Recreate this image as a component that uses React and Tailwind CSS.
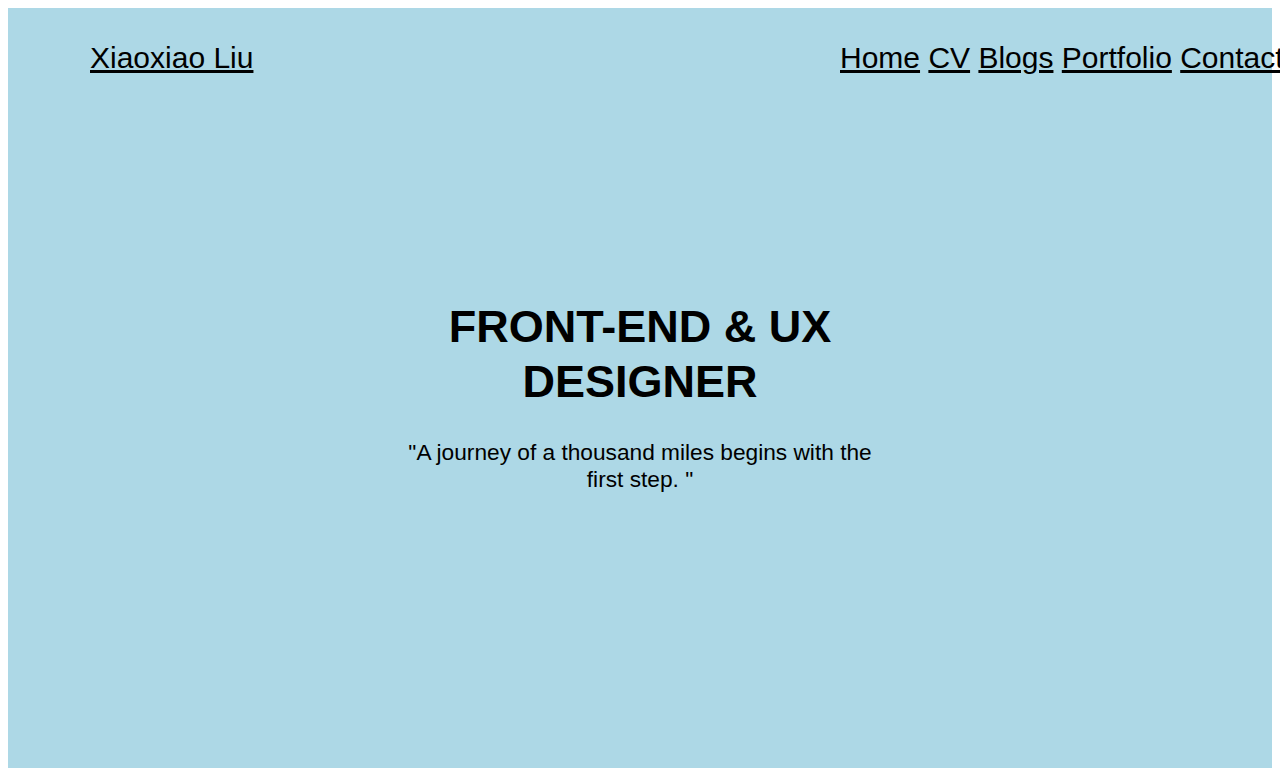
export default function App() {
  const font = { fontFamily: '"Liberation Sans", Arial, Helvetica, sans-serif' };
  return (
    <div className="h-screen w-full overflow-hidden bg-white p-2" style={font}>
      <div className="min-h-[800px] bg-[#add8e6] text-black">
        <header className="flex items-start pt-[32px] leading-[35px]">
          <div className="w-[832px] shrink-0 pl-[82px]">
            <a href="#" className="text-[30px] underline">Xiaoxiao Liu</a>
          </div>
          <nav className="whitespace-nowrap text-[30px]">
            <a href="#" className="underline">Home</a>{" "}
            <a href="#" className="underline">CV</a>{" "}
            <a href="#" className="underline">Blogs</a>{" "}
            <a href="#" className="underline">Portfolio</a>{" "}
            <a href="#" className="underline">Contact</a>
          </nav>
        </header>
        <main className="flex flex-col items-center pt-[219px] text-center">
          <div className="w-[490px]">
            <h1 className="text-[45px] font-bold leading-[55px]">FRONT-END &amp; UX DESIGNER</h1>
            <p className="mt-[30px] text-[22.7px] leading-[27px]">"A journey of a thousand miles begins with the first step. "</p>
          </div>
        </main>
      </div>
    </div>
  );
}
